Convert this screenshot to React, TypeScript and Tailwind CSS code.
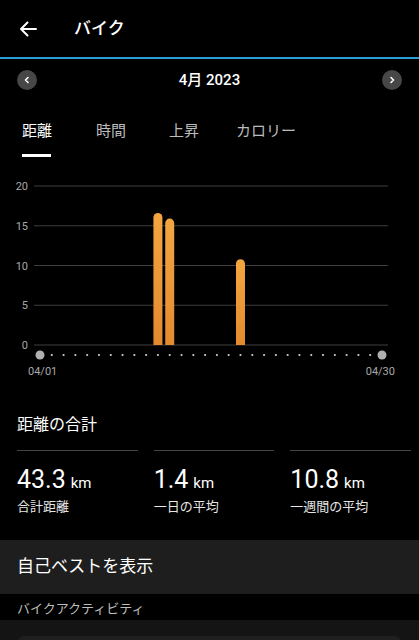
import React from "react";

const days = Array.from({ length: 30 }, (_, i) => i);
const bars: { day: number; value: number }[] = [
  { day: 10, value: 16.6 },
  { day: 11, value: 15.9 },
  { day: 17, value: 10.8 },
];

const x0 = 40;
const step = (382 - 40) / 29;
const base = 170;
const unit = 159 / 20;

function Chart() {
  const grid = [20, 15, 10, 5, 0];
  return (
    <svg width="419" height="210" viewBox="0 0 419 210" className="block">
      <defs>
        <linearGradient id="bar" x1="0" y1="0" x2="0" y2="1">
          <stop offset="0" stopColor="#f3a640" />
          <stop offset="1" stopColor="#e38a2f" />
        </linearGradient>
      </defs>
      {grid.map((g) => {
        const y = base - g * unit;
        return (
          <g key={g}>
            <line x1="34" x2="388" y1={y} y2={y} stroke="#3e3e3e" strokeWidth="1" />
            <text x="28" y={y + 4} textAnchor="end" fontSize="11" fill="#a8a8a8" fontFamily="Roboto, sans-serif">
              {g}
            </text>
          </g>
        );
      })}
      {bars.map((b) => {
        const cx = x0 + b.day * step;
        const top = base - b.value * unit;
        const w = 9;
        const r = 4.5;
        return (
          <path
            key={b.day}
            d={`M${cx - w / 2} ${base} V${top + r} A${r} ${r} 0 0 1 ${cx + w / 2} ${top + r} V${base} Z`}
            fill="url(#bar)"
          />
        );
      })}
      {days.map((d) =>
        d === 0 || d === 29 ? (
          <circle key={d} cx={x0 + d * step} cy="180" r="4.5" fill="#b0b0b0" />
        ) : (
          <circle key={d} cx={x0 + d * step} cy="180" r="1.1" fill="#d0d0d0" />
        )
      )}
      <text x="28" y="200" fontSize="11" fill="#a8a8a8" fontFamily="Roboto, sans-serif">04/01</text>
      <text x="395" y="200" textAnchor="end" fontSize="11" fill="#a8a8a8" fontFamily="Roboto, sans-serif">04/30</text>
    </svg>
  );
}

function Stat({ value, label }: { value: string; label: string }) {
  return (
    <div className="flex flex-col">
      <div className="h-px bg-[#444]" />
      <div className="mt-[14px] flex items-baseline gap-[5px] text-white">
        <span className="text-[25px] leading-[30px]">{value}</span>
        <span className="text-[15px]">km</span>
      </div>
      <div className="mt-[2px] text-[13px] leading-[20px] text-[#e6e6e6]">{label}</div>
    </div>
  );
}

export default function App() {
  return (
    <div className="h-[640px] w-[419px] overflow-hidden bg-black text-white" style={{ fontFamily: 'Roboto, "Noto Sans CJK JP", sans-serif' }}>
      <header className="flex h-[57px] items-center">
        <svg width="20" height="18" viewBox="0 0 20 18" className="ml-[18px]" fill="none" stroke="white" strokeWidth="2" strokeLinecap="round" strokeLinejoin="round">
          <path d="M3 9h15M9.5 2.5L3 9l6.5 6.5" />
        </svg>
        <h1 className="ml-[36px] text-[17px] font-medium">バイク</h1>
      </header>
      <div className="h-[2px] bg-[#2c9bd9]" />
      <div className="flex h-[42px] items-center justify-between px-[17px]">
        <button className="flex h-[20px] w-[20px] items-center justify-center rounded-full bg-[#474747]">
          <svg width="8" height="8" viewBox="0 0 8 8" fill="none" stroke="white" strokeWidth="1.6" strokeLinecap="round" strokeLinejoin="round">
            <path d="M5 1.5L2.5 4 5 6.5" />
          </svg>
        </button>
        <div className="text-[15px] font-medium">4月 2023</div>
        <button className="flex h-[20px] w-[20px] items-center justify-center rounded-full bg-[#474747]">
          <svg width="8" height="8" viewBox="0 0 8 8" fill="none" stroke="white" strokeWidth="1.6" strokeLinecap="round" strokeLinejoin="round">
            <path d="M3 1.5L5.5 4 3 6.5" />
          </svg>
        </button>
      </div>
      <nav className="mt-[20px] flex pl-[22px] text-[15px]">
        <div className="flex w-[74px] flex-col">
          <span className="leading-[20px] text-white">距離</span>
          <div className="mt-[13px] h-[3px] w-[29px] bg-white" />
        </div>
        <span className="w-[73px] leading-[20px] text-[#bdbdbd]">時間</span>
        <span className="w-[67px] leading-[20px] text-[#bdbdbd]">上昇</span>
        <span className="leading-[20px] text-[#bdbdbd]">カロリー</span>
      </nav>
      <div className="mt-[18px]">
        <Chart />
      </div>
      <div className="mt-[29px] pl-[17px] pr-[8px]">
        <h2 className="text-[16px] leading-[22px]">距離の合計</h2>
        <div className="mt-[14px] grid grid-cols-3 gap-[16px]">
          <Stat value="43.3" label="合計距離" />
          <Stat value="1.4" label="一日の平均" />
          <Stat value="10.8" label="一週間の平均" />
        </div>
      </div>
      <div className="mt-[23px] flex h-[54px] items-center bg-[#1e1e1e] px-[17px] text-[17px]">自己ベストを表示</div>
      <div className="flex h-[26px] items-end px-[17px] pb-[2px] text-[13px] text-[#bdbdbd]">バイクアクティビティ</div>
      <div className="h-[40px] bg-[#141414] px-[17px] pt-[16px]">
        <div className="h-[40px] rounded-[8px] bg-[#1f1f1f]" />
      </div>
    </div>
  );
}
